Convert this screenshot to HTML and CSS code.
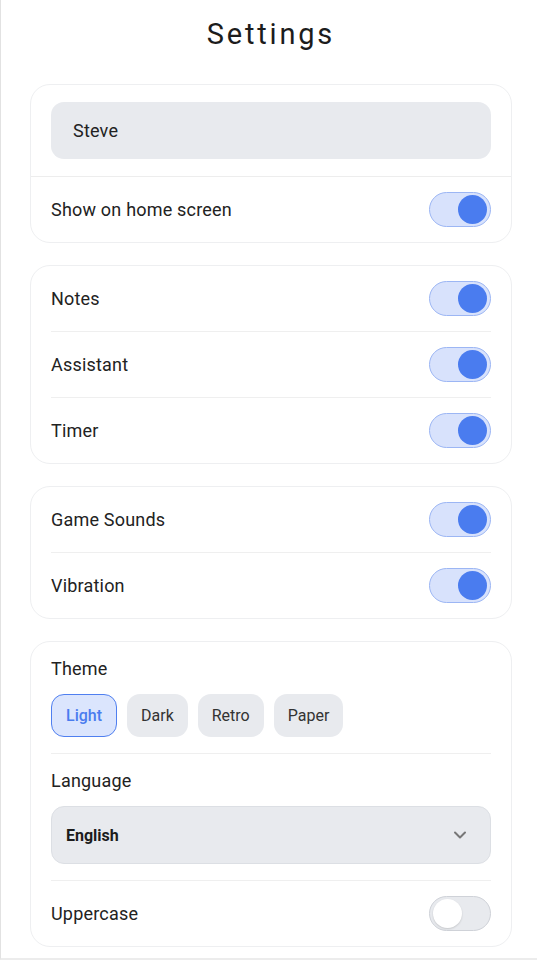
FILE: index.html
```html
<!DOCTYPE html>
<html lang="en">
<head>
    <meta charset="UTF-8">
    <meta name="viewport" content="width=device-width, initial-scale=1.0">
    <title>Settings</title>
    <link rel="stylesheet" href="styles.css">
</head>
<body>

    <div class="screen">
        <h1 class="title">Settings</h1>

        <!-- Profile -->
        <section class="card">
            <div class="name-block">
                <div class="name-input">Steve</div>
            </div>
            <div class="row">
                <span>Show on home screen</span>
                <span class="toggle on"><span class="knob"></span></span>
            </div>
        </section>

        <!-- Widgets -->
        <section class="card inset">
            <div class="row">
                <span>Notes</span>
                <span class="toggle on"><span class="knob"></span></span>
            </div>
            <div class="row">
                <span>Assistant</span>
                <span class="toggle on"><span class="knob"></span></span>
            </div>
            <div class="row">
                <span>Timer</span>
                <span class="toggle on"><span class="knob"></span></span>
            </div>
        </section>

        <!-- Sound -->
        <section class="card inset">
            <div class="row">
                <span>Game Sounds</span>
                <span class="toggle on"><span class="knob"></span></span>
            </div>
            <div class="row">
                <span>Vibration</span>
                <span class="toggle on"><span class="knob"></span></span>
            </div>
        </section>

        <!-- Appearance -->
        <section class="card inset">
            <div class="block">
                <div class="label">Theme</div>
                <div class="chips">
                    <span class="chip active">Light</span>
                    <span class="chip">Dark</span>
                    <span class="chip">Retro</span>
                    <span class="chip">Paper</span>
                </div>
            </div>
            <div class="block">
                <div class="label">Language</div>
                <div class="select">
                    <span>English</span>
                    <svg width="16" height="16" viewBox="0 0 16 16" fill="none" stroke="#777" stroke-width="2" stroke-linecap="round" stroke-linejoin="round">
                        <path d="M3 5.5l5 5 5-5"/>
                    </svg>
                </div>
            </div>
            <div class="row">
                <span>Uppercase</span>
                <span class="toggle"><span class="knob"></span></span>
            </div>
        </section>
    </div>

</body>
</html>
```

FILE: styles.css
```css
/* Page */
body {
    margin: 0;
    background-color: #fff;
    font-family: Roboto, 'Noto Sans', sans-serif;
    color: #222;
}

.screen {
    height: 958px;
    border-left: 1px solid #e2e2e2;
    border-bottom: 2px solid #ececec;
    padding: 0 25px 0 29px;
    overflow: hidden;
}

.title {
    margin: 0;
    padding: 14px 0 30px;
    text-align: center;
    font-size: 29px;
    font-weight: 400;
    line-height: 40px;
    letter-spacing: 2.8px;
    color: #1c1c1c;
}

/* Cards */
.card {
    border: 1px solid #eeeff1;
    border-radius: 20px;
    margin-bottom: 22px;
}

.inset {
    padding: 0 20px;
}

.inset > .row,
.inset > .block {
    padding-left: 0;
    padding-right: 0;
    border-bottom: 1px solid #efefef;
}

.inset > :last-child {
    border-bottom: none;
}

.name-block {
    padding: 17px 20px;
    border-bottom: 1px solid #ededed;
}

.name-input {
    height: 57px;
    border-radius: 13px;
    background-color: #e8eaee;
    display: flex;
    align-items: center;
    padding-left: 22px;
    font-size: 18px;
    letter-spacing: 0.2px;
    color: #222;
}

/* Rows */
.row {
    height: 65px;
    padding: 0 20px;
    display: flex;
    align-items: center;
    justify-content: space-between;
    font-size: 18px;
    letter-spacing: 0.2px;
}

/* Toggles */
.toggle {
    box-sizing: border-box;
    width: 62px;
    height: 35px;
    border-radius: 18px;
    border: 1.5px solid #cfd2d8;
    background-color: #e8eaee;
    display: flex;
    align-items: center;
    padding: 0 3px;
}

.toggle .knob {
    width: 29px;
    height: 29px;
    border-radius: 50%;
    background-color: #fff;
    box-shadow: 0 1px 2px rgba(0, 0, 0, 0.15);
}

.toggle.on {
    background-color: #d8e2fc;
    border-color: #9cb6f4;
    justify-content: flex-end;
}

.toggle.on .knob {
    background-color: #4a7cef;
    box-shadow: none;
}

/* Theme + language blocks */
.block {
    padding: 14px 0 16px;
}

.label {
    font-size: 18px;
    line-height: 26px;
    letter-spacing: 0.2px;
    margin-bottom: 12px;
}

.chips {
    display: flex;
    gap: 10px;
}

.chip {
    height: 43px;
    padding: 0 14px;
    border-radius: 13px;
    background-color: #e8eaee;
    display: flex;
    align-items: center;
    font-size: 16px;
    color: #333;
    box-sizing: border-box;
}

.chip.active {
    border: 1.5px solid #4f7ff0;
    background-color: #dbe5fd;
    color: #4a7cef;
    font-weight: 500;
}

.select {
    height: 58px;
    box-sizing: border-box;
    border: 1px solid #dcdfe4;
    border-radius: 13px;
    background-color: #e8eaee;
    display: flex;
    align-items: center;
    justify-content: space-between;
    padding: 0 22px 0 14px;
    font-size: 16px;
    font-weight: 700;
    color: #1c1c1c;
}
```
